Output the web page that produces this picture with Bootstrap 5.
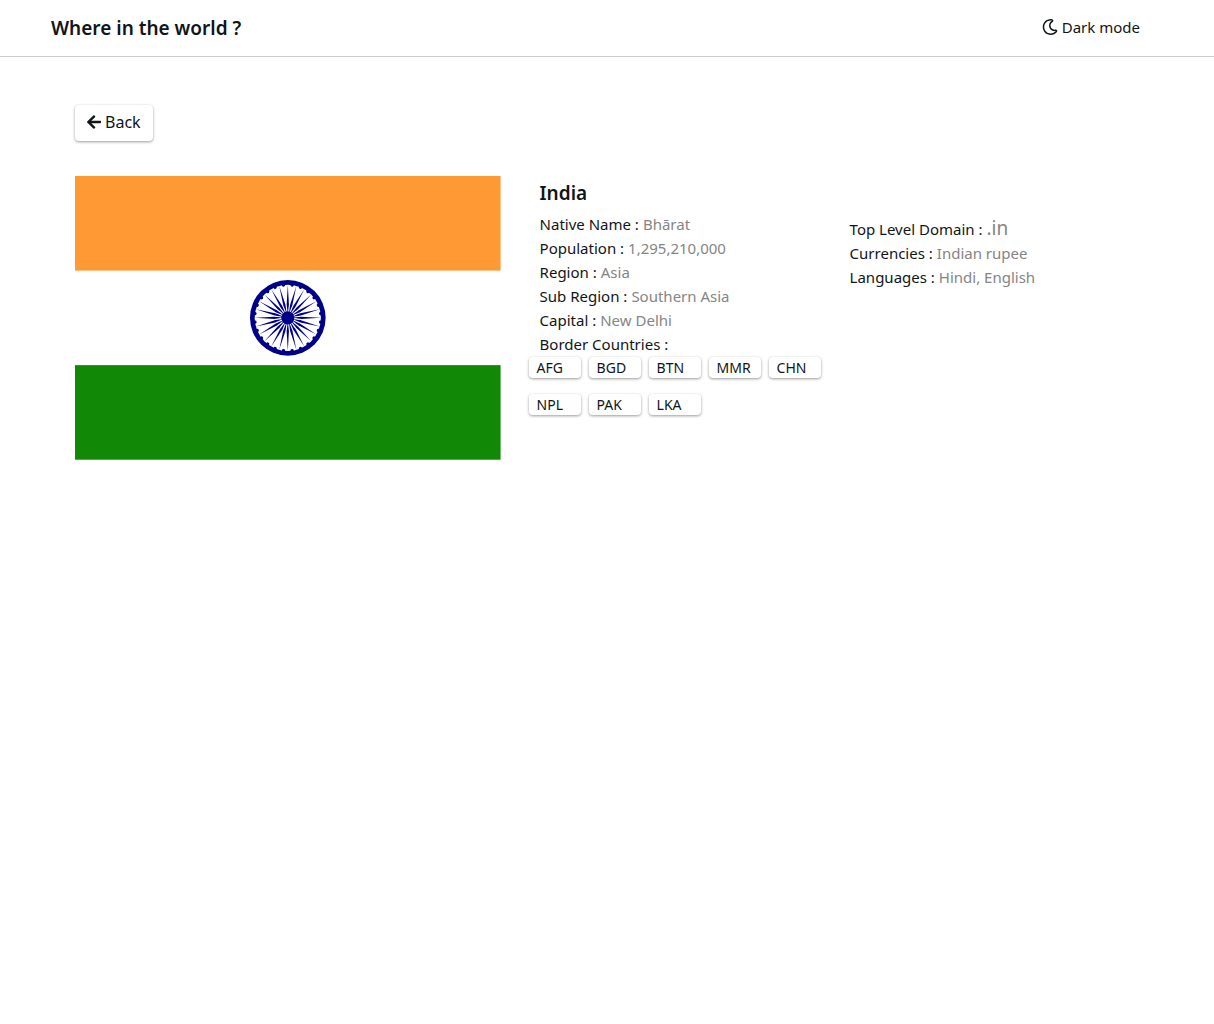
<!DOCTYPE html>
<html lang="en">
<head>
<meta charset="utf-8">
<meta name="viewport" content="width=device-width, initial-scale=1">
<title>Where in the world ?</title>
<link href="https://cdn.jsdelivr.net/npm/bootstrap@5.3.0/dist/css/bootstrap.min.css" rel="stylesheet">
<style>
body { font-family: "Noto Sans", "Open Sans", sans-serif; font-size: 15px; line-height: 24px; color: #111517; background: #fff; }
.site-bar { height: 57px; border-bottom: 1px solid #ccc; padding: 0 74px 0 51px; }
.site-title { font-size: 19px; line-height: 30px; font-weight: 600; }
.plain-btn { border: 0; background: none; padding: 0 0 2px; color: inherit; }
.page-body { padding: 48px 75px; }
.raised { border: 0; border-radius: 4px; background: #fff; color: #111517; box-shadow: 0 1px 3px rgba(0,0,0,.4); text-decoration: none; }
.back-btn { height: 36px; padding: 0 12px 2px; font-size: 16px; }
.country-row { margin-top: 35px; }
.flag-box { flex: 0 0 40%; }
.flag-box svg { width: 100%; height: auto; }
.facts { flex: 0 0 310px; }
.facts dl { padding-left: 11px; }
.country-name { font-size: 19px; line-height: 24px; font-weight: 600; padding: 5px 0 0 11px; margin-bottom: 7px; }
.facts dt { font-weight: 400; }
.facts dd { color: #858585; }
.facts .tld { font-size: 19px; line-height: 25px; }
.more-facts { flex: 1 1 0; padding-top: 40px; }
.chips { column-gap: 8px; row-gap: 16px; margin-top: 1px; }
.chip { width: 52px; height: 21px; padding-left: 8px; font-size: 14px; line-height: 21px; }
</style>
</head>
<body>
<header class="site-bar d-flex align-items-center justify-content-between">
  <h1 class="site-title mb-0">Where in the world ?</h1>
  <button type="button" class="plain-btn d-flex align-items-center gap-1">
    <svg width="16" height="16" viewBox="0 0 512 512" fill="currentColor" aria-hidden="true"><path d="M279.135 512c78.756 0 150.982-35.804 198.844-94.775 28.27-34.831-2.558-85.722-46.249-77.401-82.348 15.683-158.272-47.268-158.272-130.792 0-48.424 26.06-92.292 67.434-115.836 38.745-22.05 28.999-80.788-15.022-88.919A257.936 257.936 0 0 0 279.135 0c-141.36 0-256 114.575-256 256 0 141.36 114.576 256 256 256zm0-464c12.985 0 25.689 1.201 38.016 3.478-54.76 31.163-91.693 90.042-91.693 157.554 0 113.848 103.641 199.2 215.252 177.944C402.574 433.964 344.366 464 279.135 464c-114.875 0-208-93.125-208-208s93.125-208 208-208z"/></svg>
    Dark mode
  </button>
</header>
<main class="page-body">
  <button type="button" class="raised back-btn d-inline-flex align-items-center gap-1">
    <svg width="14" height="16" viewBox="0 0 448 512" fill="currentColor" aria-hidden="true"><path d="M257.5 445.1l-22.2 22.2c-9.4 9.4-24.6 9.4-33.9 0L7 273c-9.4-9.4-9.4-24.6 0-33.9L201.4 44.7c9.4-9.4 24.6-9.4 33.9 0l22.2 22.2c9.5 9.5 9.3 25-.4 34.3L136.6 216H424c13.3 0 24 10.7 24 24v32c0 13.3-10.7 24-24 24H136.6l120.5 114.8c9.8 9.3 10 24.8.4 34.3z"/></svg>
    Back
  </button>
  <div class="country-row d-flex">
    <div class="flag-box me-4">
      <svg class="d-block" viewBox="0 0 225 150" role="img" aria-label="Flag of India">
        <defs>
          <g id="spoke"><circle cx="0" cy="17.5" r=".875" transform="rotate(7.5)"/><path d="M0 17.5.6 7C.6 7 0 2 0 2S-.6 7-.6 7L0 17.5"/></g>
          <g id="spokes2"><use href="#spoke"/><use href="#spoke" transform="rotate(15)"/></g>
          <g id="spokes4"><use href="#spokes2"/><use href="#spokes2" transform="rotate(30)"/></g>
          <g id="spokes8"><use href="#spokes4"/><use href="#spokes4" transform="rotate(60)"/></g>
        </defs>
        <rect width="225" height="50" fill="#f93"/>
        <rect y="100" width="225" height="50" fill="#128807"/>
        <g transform="translate(112.5 75)" fill="#008">
          <circle r="20"/><circle r="17.5" fill="#fff"/><circle r="3.5"/>
          <use href="#spokes8"/><use href="#spokes8" transform="rotate(120)"/><use href="#spokes8" transform="rotate(240)"/>
        </g>
      </svg>
    </div>
    <section class="facts ms-1">
      <h2 class="country-name">India</h2>
      <dl class="mb-0">
        <div class="d-flex gap-1"><dt>Native Name :</dt><dd class="mb-0">Bhārat</dd></div>
        <div class="d-flex gap-1"><dt>Population :</dt><dd class="mb-0">1,295,210,000</dd></div>
        <div class="d-flex gap-1"><dt>Region :</dt><dd class="mb-0">Asia</dd></div>
        <div class="d-flex gap-1"><dt>Sub Region :</dt><dd class="mb-0">Southern Asia</dd></div>
        <div class="d-flex gap-1"><dt>Capital :</dt><dd class="mb-0">New Delhi</dd></div>
        <div><dt>Border Countries :</dt></div>
      </dl>
      <nav class="chips d-flex flex-wrap" aria-label="Border countries">
        <a href="#AFG" class="raised chip">AFG</a>
        <a href="#BGD" class="raised chip">BGD</a>
        <a href="#BTN" class="raised chip">BTN</a>
        <a href="#MMR" class="raised chip">MMR</a>
        <a href="#CHN" class="raised chip">CHN</a>
        <a href="#NPL" class="raised chip">NPL</a>
        <a href="#PAK" class="raised chip">PAK</a>
        <a href="#LKA" class="raised chip">LKA</a>
      </nav>
    </section>
    <section class="facts more-facts">
      <dl class="mb-0">
        <div class="d-flex align-items-baseline gap-1"><dt>Top Level Domain :</dt><dd class="tld mb-0">.in</dd></div>
        <div class="d-flex gap-1"><dt>Currencies :</dt><dd class="mb-0">Indian rupee</dd></div>
        <div class="d-flex gap-1"><dt>Languages :</dt><dd class="mb-0">Hindi, English</dd></div>
      </dl>
    </section>
  </div>
</main>
<script src="https://cdn.jsdelivr.net/npm/bootstrap@5.3.0/dist/js/bootstrap.bundle.min.js"></script>
</body>
</html>
